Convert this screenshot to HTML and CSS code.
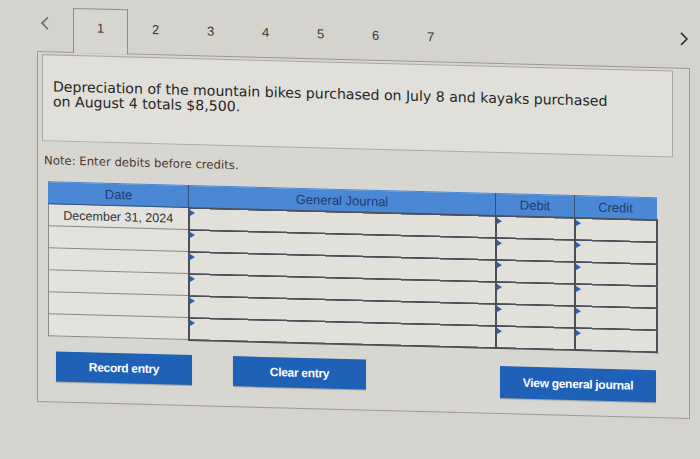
FILE: index.html
```html
<!DOCTYPE html>
<html lang="en">
<head>
<meta charset="utf-8">
<title>Journal entry</title>
<link rel="stylesheet" href="styles.css">
</head>
<body>
<div class="stage">
  <div class="tabs">
    <span class="chev chev-left">
      <svg width="10" height="14" viewBox="0 0 10 14"><path d="M8 1 L2 7 L8 13" fill="none" stroke="#6d6d6d" stroke-width="1.6"/></svg>
    </span>
    <ul class="tab-list">
      <li class="tab active">1</li>
      <li class="tab">2</li>
      <li class="tab">3</li>
      <li class="tab">4</li>
      <li class="tab">5</li>
      <li class="tab">6</li>
      <li class="tab">7</li>
    </ul>
    <span class="chev chev-right">
      <svg width="10" height="14" viewBox="0 0 10 14"><path d="M2 1 L8 7 L2 13" fill="none" stroke="#2f2f2f" stroke-width="1.6"/></svg>
    </span>
  </div>
  <div class="panel">
    <div class="question">
      <p>Depreciation of the mountain bikes purchased on July 8 and kayaks purchased on August 4 totals $8,500.</p>
    </div>
    <p class="note">Note: Enter debits before credits.</p>
    <table class="journal">
      <thead>
        <tr>
          <th class="c-date">Date</th>
          <th class="c-gj">General Journal</th>
          <th class="c-num">Debit</th>
          <th class="c-num c-last">Credit</th>
        </tr>
      </thead>
      <tbody>
        <tr><td class="c-date">December 31, 2024</td><td class="c-gj inp"></td><td class="c-num inp"></td><td class="c-num inp c-last"></td></tr>
        <tr><td class="c-date"></td><td class="c-gj inp"></td><td class="c-num inp"></td><td class="c-num inp c-last"></td></tr>
        <tr><td class="c-date"></td><td class="c-gj inp"></td><td class="c-num inp"></td><td class="c-num inp c-last"></td></tr>
        <tr><td class="c-date"></td><td class="c-gj inp"></td><td class="c-num inp"></td><td class="c-num inp c-last"></td></tr>
        <tr><td class="c-date"></td><td class="c-gj inp"></td><td class="c-num inp"></td><td class="c-num inp c-last"></td></tr>
        <tr><td class="c-date"></td><td class="c-gj inp"></td><td class="c-num inp"></td><td class="c-num inp c-last"></td></tr>
      </tbody>
    </table>
    <div class="actions">
      <button class="btn btn-record">Record entry</button>
      <button class="btn btn-clear">Clear entry</button>
      <button class="btn btn-view">View general journal</button>
    </div>
  </div>
</div>
</body>
</html>
```
FILE: styles.css
```css
* { box-sizing: border-box; }

body {
  margin: 0;
  width: 700px;
  height: 459px;
  overflow: hidden;
  background: #d5d3cd;
  font-family: "Liberation Sans", Arial, sans-serif;
  color: #333;
}

.stage {
  transform: skewY(1.5deg);
  transform-origin: 0 0;
  padding-top: 6px;
}

.tabs {
  display: flex;
  align-items: flex-start;
  height: 44px;
  position: relative;
  z-index: 1;
}

.chev {
  display: block;
  line-height: 0;
}

.chev-left {
  margin-left: 40px;
  margin-top: 9px;
}

.chev-right {
  margin-left: auto;
  margin-right: 11px;
  margin-top: 8px;
}

.tab-list {
  display: flex;
  list-style: none;
  margin: 0 0 0 23px;
  padding: 0;
}

.tab {
  width: 55px;
  height: 45px;
  padding-top: 11px;
  text-align: center;
  font-size: 13px;
  line-height: 15px;
  color: #3a3a3a;
  border: 1px solid transparent;
  border-bottom: none;
}

.tab.active {
  background: #d8d6d0;
  border-color: #8f8d88;
}

.panel {
  margin-left: 37px;
  width: 653px;
  border: 1px solid #9a9892;
  background: #d8d6d0;
  padding-bottom: 15px;
}

.question {
  margin: 2px 16px 0 4px;
  height: 87px;
  border: 1px solid #a9a7a2;
  background: #e1dfda;
  padding: 24px 10px 0 10px;
}

.question p {
  margin: 0;
  max-width: 570px;
  font-family: "DejaVu Sans", Verdana, sans-serif;
  font-size: 14.1px;
  line-height: 15px;
  color: #262626;
}

.note {
  margin: 12px 0 0 6px;
  font-family: "DejaVu Sans", Verdana, sans-serif;
  font-size: 11.7px;
  line-height: 14px;
  color: #4a3a33;
}

.journal {
  margin: 14px 0 0 10px;
  border-collapse: collapse;
  table-layout: fixed;
  width: 608px;
}

.journal th {
  height: 22px;
  background: #4a88d6;
  color: #1f3b6c;
  font-weight: normal;
  font-size: 13px;
  padding: 0;
  border: 1px solid #37507a;
  border-top: 1px solid #4a88d6;
}

.journal th.c-date { border-left-color: #4a88d6; }
.journal th.c-last { border-right-color: #4a88d6; }

.c-date { width: 140px; }
.c-gj { width: 307px; }
.c-num { width: 79px; }
.c-last { width: 82px; }

.journal td {
  height: 22px;
  padding: 0;
  background: #e2e0db;
}

.journal td.c-date {
  border: 1px solid #8b8a86;
  text-align: center;
  font-size: 12.5px;
  color: #333;
  background: #e4e2dd;
}

.journal td.inp {
  position: relative;
  border: 2px solid #4d5058;
}

.journal td.inp::before {
  content: "";
  position: absolute;
  left: 0;
  top: 1px;
  border-left: 5px solid #2b5fb4;
  border-top: 3px solid transparent;
  border-bottom: 3px solid transparent;
}

.actions {
  display: flex;
  align-items: flex-start;
  margin-top: 14px;
}

.btn {
  height: 30px;
  border: none;
  background: #1f61b7;
  color: #fff;
  font-family: "Liberation Sans", Arial, sans-serif;
  font-weight: bold;
  font-size: 12px;
  letter-spacing: -0.3px;
  padding: 0;
  box-shadow: 0 1px 1px rgba(0,0,0,0.25);
}

.btn-record { margin-left: 18px; width: 136px; }
.btn-clear { margin-left: 41px; width: 133px; }
.btn-view { margin-left: 134px; width: 156px; height: 32px; margin-top: 3px; }
```
